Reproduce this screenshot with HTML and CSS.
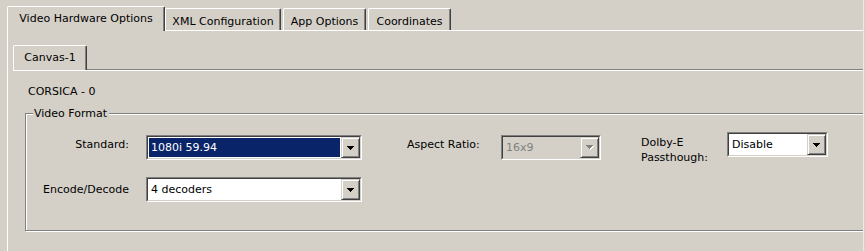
FILE: index.html
```html
<!DOCTYPE html>
<html lang="en">
<head>
    <meta charset="UTF-8">
    <title>Video Hardware Options</title>
    <link rel="stylesheet" href="styles.css">
</head>
<body>
    <div class="window">
        <div class="tab-strip">
            <div class="tab active tab-video">Video Hardware Options</div>
            <div class="tab tab-xml">XML Configuration</div>
            <div class="tab tab-app">App Options</div>
            <div class="tab tab-coords">Coordinates</div>
        </div>
        <div class="tab-panel">
            <div class="sub-strip">
                <div class="tab active tab-canvas">Canvas-1</div>
            </div>
            <div class="sub-panel">
                <div class="device">CORSICA - 0</div>
                <fieldset class="group">
                    <legend>Video Format</legend>
                    <div class="row row-first">
                        <label class="lbl lbl-standard">Standard:</label>
                        <div class="combo combo-standard">
                            <div class="combo-field">
                                <span class="combo-value selected">1080i 59.94</span>
                                <span class="combo-btn">
                                    <svg width="7" height="4" viewBox="0 0 7 4"><rect x="0" y="0" width="7" height="1"/><rect x="1" y="1" width="5" height="1"/><rect x="2" y="2" width="3" height="1"/><rect x="3" y="3" width="1" height="1"/></svg>
                                </span>
                            </div>
                        </div>
                        <label class="lbl lbl-aspect">Aspect Ratio:</label>
                        <div class="combo combo-aspect disabled">
                            <div class="combo-field">
                                <span class="combo-value">16x9</span>
                                <span class="combo-btn">
                                    <svg width="8" height="5" viewBox="0 0 8 5"><g fill="#fff"><rect x="1" y="1" width="7" height="1"/><rect x="2" y="2" width="5" height="1"/><rect x="3" y="3" width="3" height="1"/><rect x="4" y="4" width="1" height="1"/></g><g fill="#808080"><rect x="0" y="0" width="7" height="1"/><rect x="1" y="1" width="5" height="1"/><rect x="2" y="2" width="3" height="1"/><rect x="3" y="3" width="1" height="1"/></g></svg>
                                </span>
                            </div>
                        </div>
                        <label class="lbl lbl-dolby">Dolby-E<br>Passthough:</label>
                        <div class="combo combo-dolby">
                            <div class="combo-field">
                                <span class="combo-value">Disable</span>
                                <span class="combo-btn">
                                    <svg width="7" height="4" viewBox="0 0 7 4"><rect x="0" y="0" width="7" height="1"/><rect x="1" y="1" width="5" height="1"/><rect x="2" y="2" width="3" height="1"/><rect x="3" y="3" width="1" height="1"/></svg>
                                </span>
                            </div>
                        </div>
                    </div>
                    <div class="row row-second">
                        <label class="lbl lbl-encode">Encode/Decode</label>
                        <div class="combo combo-encode">
                            <div class="combo-field">
                                <span class="combo-value">4 decoders</span>
                                <span class="combo-btn">
                                    <svg width="7" height="4" viewBox="0 0 7 4"><rect x="0" y="0" width="7" height="1"/><rect x="1" y="1" width="5" height="1"/><rect x="2" y="2" width="3" height="1"/><rect x="3" y="3" width="1" height="1"/></svg>
                                </span>
                            </div>
                        </div>
                    </div>
                </fieldset>
            </div>
        </div>
    </div>
</body>
</html>
```

FILE: styles.css
```css
body {
    font-family: "DejaVu Sans", sans-serif;
    font-size: 11px;
    line-height: 13px;
    color: #000;
    background-color: #d4d0c8;
    margin: 0;
    padding: 0;
}
.window {
    width: 864px;
    height: 251px;
    border-right: 1px solid #ebe9e4;
    overflow: hidden;
    padding-left: 7px;
    box-sizing: border-box;
}

/* tabs */
.tab-strip {
    display: flex;
    align-items: flex-end;
    height: 30px;
    border-bottom: 1px solid #fff;
}
.tab {
    box-sizing: border-box;
    height: 22px;
    padding-top: 6px;
    text-align: center;
    white-space: nowrap;
    background-color: #d4d0c8;
    border-top: 1px solid #fff;
    border-left: 1px solid #fff;
    border-right: 1px solid #404040;
    border-radius: 2px 2px 0 0;
    box-shadow: inset -1px 0 0 #808080;
}
.tab.active {
    height: 25px;
    padding-top: 5px;
    margin-bottom: -1px;
}
.tab-video { width: 158px; }
.tab-xml { width: 116px; }
.tab-app { width: 83px; margin-left: 2px; }
.tab-coords { width: 83px; margin-left: 2px; }

.tab-panel {
    border-left: 1px solid #fff;
    height: 220px;
    padding-left: 5px;
    padding-top: 15px;
    box-sizing: border-box;
}
.sub-strip {
    display: flex;
    align-items: flex-end;
    height: 23px;
    border-bottom: 1px solid #808080;
    box-shadow: 0 1px 0 #fff;
}
.tab-canvas {
    width: 74px;
    height: 25px;
    padding-top: 6px;
    margin-bottom: -2px;
}
.sub-panel {
    padding-top: 1px;
    padding-left: 15px;
}
.device {
    margin-top: 14px;
}

/* group box */
.group {
    margin: 9px -40px 0 -3px;
    padding: 15px 0 28px 0;
    border: 1px solid #808080;
    box-shadow: 1px 1px 0 #fff, inset 1px 1px 0 #fff;
}
.group legend {
    margin-left: 7px;
    padding: 0 2px 0 1px;
    background-color: #d4d0c8;
    line-height: 13px;
}
.row {
    display: flex;
    align-items: flex-start;
}
.row-first {
    height: 25px;
}
.row-second {
    margin-top: 17px;
}
.lbl {
    padding-top: 3px;
    white-space: nowrap;
}
.lbl-standard {
    width: 103px;
    text-align: right;
    margin-right: 17px;
}
.lbl-encode {
    margin-left: 17px;
    width: 103px;
    padding-top: 6px;
}
.lbl-aspect {
    margin-left: 45px;
    width: 94px;
}
.lbl-dolby {
    margin-left: 40px;
    width: 86px;
    line-height: 15px;
    padding-top: 0;
}

/* combo boxes */
.combo {
    box-sizing: border-box;
    height: 25px;
    border: 1px solid;
    border-color: #808080 #fff #fff #808080;
}
.combo-field {
    display: flex;
    height: 100%;
    box-sizing: border-box;
    border: 1px solid;
    border-color: #404040 #d4d0c8 #d4d0c8 #404040;
    background-color: #fff;
}
.combo-value {
    flex: 1;
    margin: 1px;
    padding: 3px 0 0 2px;
    white-space: nowrap;
}
.combo-value.selected {
    background-color: #0a246a;
    color: #fff;
}
.combo-btn {
    width: 19px;
    box-sizing: border-box;
    display: flex;
    align-items: center;
    justify-content: center;
    background-color: #d4d0c8;
    border: 1px solid;
    border-color: #d4d0c8 #404040 #404040 #d4d0c8;
    box-shadow: inset 1px 1px 0 #fff, inset -1px -1px 0 #808080;
}
.combo-btn svg {
    display: block;
    shape-rendering: crispEdges;
}
.combo-standard, .combo-encode { width: 216px; }
.combo-aspect { width: 100px; }
.combo-dolby {
    width: 101px;
    margin-top: -3px;
}
.disabled .combo-field {
    background-color: #d4d0c8;
}
.disabled .combo-value {
    color: #808080;
}
```
